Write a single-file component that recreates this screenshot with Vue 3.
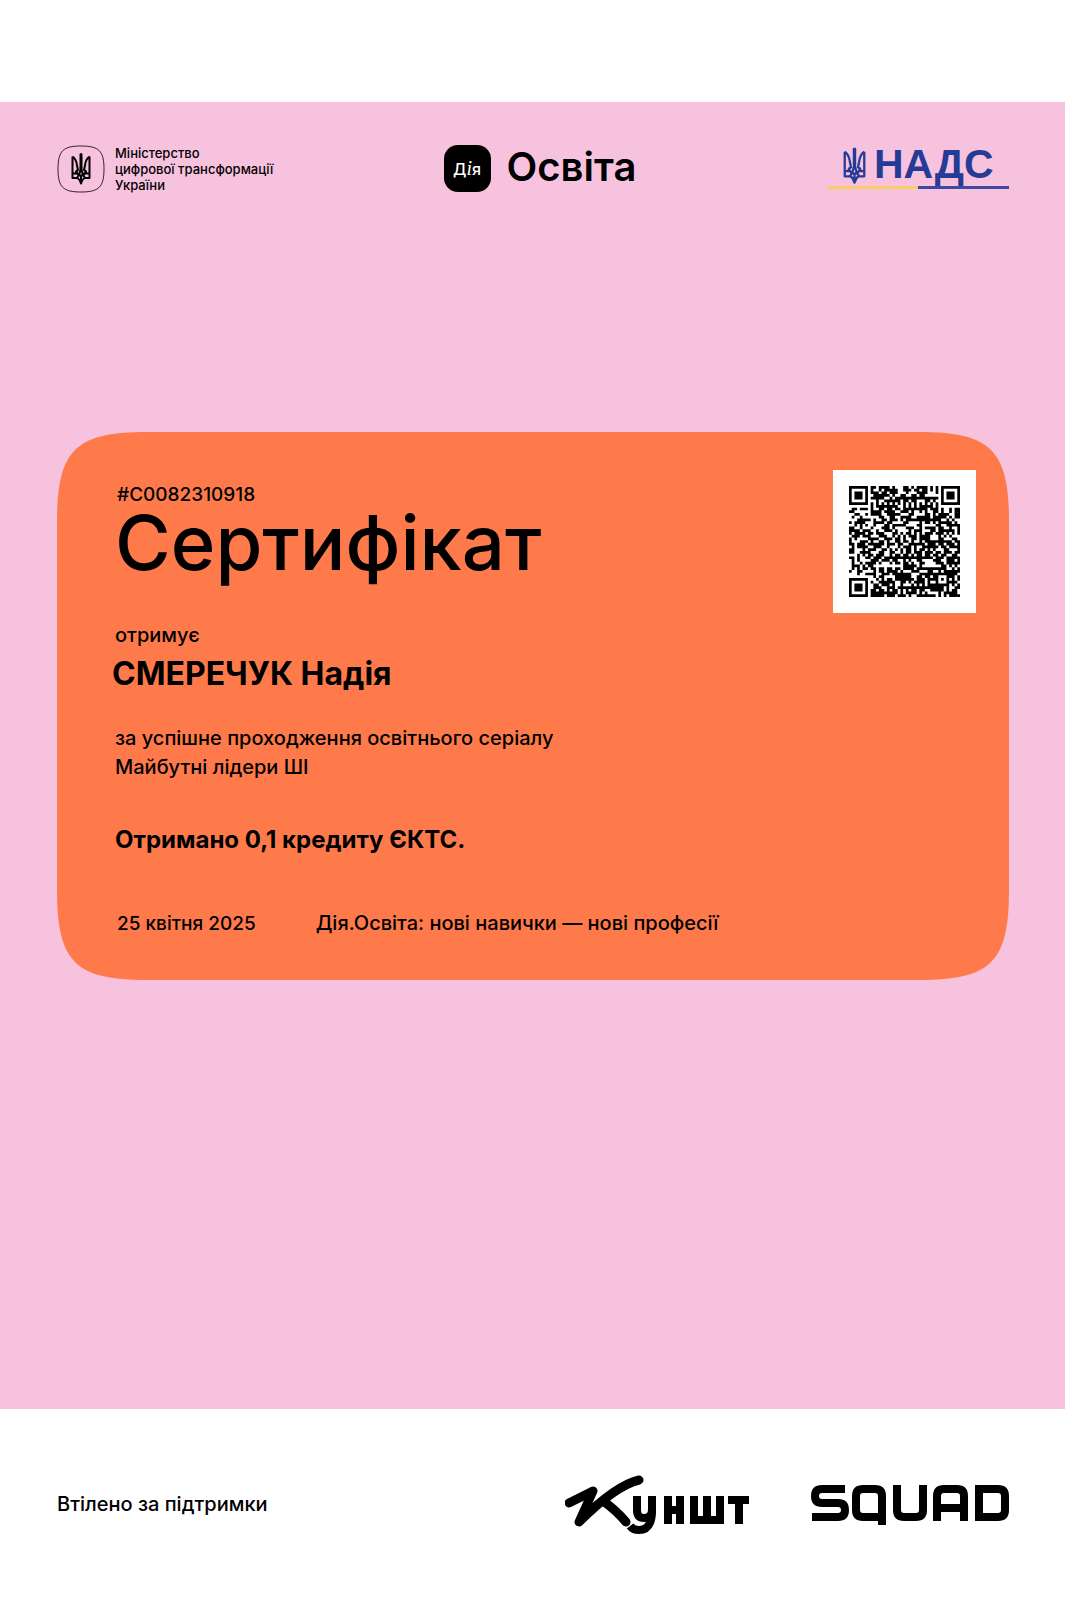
<script setup>
const SIZE = 41

function inSquare(x, y, cx, cy) {
  return Math.max(Math.abs(x - cx), Math.abs(y - cy))
}

function noise(x, y) {
  let h = Math.imul(x + 11, 374761393) ^ Math.imul(y + 7, 668265263)
  h = Math.imul(h ^ (h >>> 13), 1274126177)
  return ((h ^ (h >>> 16)) >>> 0) / 4294967296
}

function isDark(x, y) {
  const eyes = [[3, 3], [SIZE - 4, 3], [3, SIZE - 4]]
  for (const [cx, cy] of eyes) {
    const d = inSquare(x, y, cx, cy)
    if (d <= 4) return d !== 2 && d !== 4
  }
  const a = inSquare(x, y, SIZE - 7, SIZE - 7)
  if (a <= 2) return a !== 1
  if (x === 6 || y === 6) return (x + y) % 2 === 0
  return noise(x, y) < 0.61
}

let modules = ''
for (let y = 0; y < SIZE; y++) {
  for (let x = 0; x < SIZE; x++) {
    if (isDark(x, y)) modules += `M${x} ${y}h1v1h-1z`
  }
}

const trident = 'M3 7V50H13Q18 53 20 61Q22 53 27 50H37V7M3 7Q11 13 12 25L14 34Q9 36 10 41H3M37 7Q29 13 28 25L26 34Q31 36 30 41H37M20 28Q18 42 12 50M20 28Q22 42 28 50M11 38Q13 45 20 45Q27 45 29 38M20 45V61'
</script>

<template>
  <main class="page">
    <section class="sheet">
      <header class="header">
        <div class="ministry">
          <svg class="badge" viewBox="0 0 48 48" aria-hidden="true">
            <path d="M24 1C42 1 47 6 47 24S42 47 24 47 1 42 1 24 6 1 24 1z" fill="none" stroke="#33202c" stroke-width="1" />
            <svg x="14" y="8" width="20" height="32" viewBox="0 0 40 64">
              <path class="trident" :d="trident" />
              <path class="spike" d="M20 3V30" />
            </svg>
          </svg>
          <p class="ministry-name">Міністерство<br />цифрової трансформації<br />України</p>
        </div>

        <div class="osvita">
          <span class="diia"><span>Д<i>і</i>я</span></span>
          <span class="osvita-name">Освіта</span>
        </div>

        <div class="nads">
          <div class="nads-row">
            <svg class="nads-trident" viewBox="0 0 40 64" aria-hidden="true">
              <path class="trident" :d="trident" />
              <path class="spike" d="M20 3V30" />
            </svg>
            <span>НАДС</span>
          </div>
          <div class="flag"></div>
        </div>
      </header>

      <article class="card">
        <svg class="card-shape" viewBox="0 0 952 548" preserveAspectRatio="none" aria-hidden="true">
          <path d="M90 0H862C934 0 952 18 952 90V458C952 530 934 548 862 548H90C18 548 0 530 0 458V90C0 18 18 0 90 0z" fill="#ff7a4b" />
        </svg>
        <div class="card-top">
          <div class="heading">
            <p class="number">#C0082310918</p>
            <h1>Сертифікат</h1>
          </div>
          <div class="qr">
            <svg :viewBox="`0 0 ${SIZE} ${SIZE}`" role="img" aria-label="QR">
              <path :d="modules" />
            </svg>
          </div>
        </div>
        <p class="receives">отримує</p>
        <h2>СМЕРЕЧУК Надія</h2>
        <p class="reason">за успішне проходження освітнього серіалу<br />Майбутні лідери ШІ</p>
        <p class="credit">Отримано 0,1 кредиту ЄКТС.</p>
        <div class="meta">
          <span>25 квітня 2025</span>
          <span>Дія.Освіта: нові навички — нові професії</span>
        </div>
      </article>
    </section>

    <footer class="footer">
      <p>Втілено за підтримки</p>
      <div class="partners">
        <svg class="kunsht" viewBox="0 0 188 64" role="img" aria-label="Куншт">
          <g fill="none" stroke="#000">
            <path d="M4 29L28 17 14 48C31 31 53 11 74 6M38 27Q51 36 61 48" stroke-width="9" stroke-linecap="round" stroke-linejoin="round" />
            <path d="M72 22V36Q72 44 79 44Q87 44 87 35V22" stroke-width="8" />
            <path d="M87 22V39Q86 56 74 56Q68 56 65 52" stroke-width="8" />
            <path d="M103 22V50M115 22V50M103 36H115M129 22V50M142 22V50M155 22V50M125 46H159M163 26H184M174 24V50" stroke-width="8" />
          </g>
        </svg>
        <svg class="squad" viewBox="0 0 198 44" role="img" aria-label="SQUAD">
          <g fill="none" stroke="#000" stroke-width="8">
            <path d="M34 5H11Q4 5 4 12T11 19H27Q34 19 34 26T27 33H1" />
            <path d="M71 41V12Q71 5 64 5H52Q45 5 45 12V26Q45 33 52 33H71" />
            <path d="M86 1V26Q86 33 93 33H105Q112 33 112 26V1" />
            <path d="M126 37V12Q126 5 133 5H146Q153 5 153 12V37M126 24H153" />
            <path d="M168 5H187Q194 5 194 12V26Q194 33 187 33H168z" />
          </g>
        </svg>
      </div>
    </footer>
  </main>
</template>

<style>
body {
  margin: 0;
  background: #fff;
}
</style>

<style scoped>
.page {
  padding-top: 102px;
  font-family: Inter, "Liberation Sans", sans-serif;
  font-size: 20px;
  line-height: 29px;
  font-weight: 500;
  color: #000;
}

p,
h1,
h2 {
  margin: 0;
}

.sheet {
  padding: 43px 56px 429px 57px;
  background: #f7c2de;
}

.header {
  display: grid;
  grid-template-columns: 1fr auto 1fr;
  align-items: start;
}

.ministry {
  display: flex;
  gap: 10px;
}

.badge {
  width: 48px;
  height: 48px;
}

.trident {
  fill: none;
  stroke: currentColor;
  stroke-width: 4;
  stroke-linejoin: round;
}

.spike {
  stroke: currentColor;
  stroke-width: 6;
  stroke-linecap: round;
}

.ministry-name {
  font-size: 13px;
  line-height: 16px;
}

.osvita {
  display: flex;
  align-items: flex-start;
  gap: 16px;
  padding-left: 14px;
}

.diia {
  display: grid;
  place-items: center;
  width: 47px;
  height: 47px;
  border-radius: 14px;
  background: #000;
  color: #fff;
  font-size: 16px;
  font-weight: 500;
}

.diia i {
  font-family: "Liberation Serif", serif;
  font-size: 20px;
}

.osvita-name {
  font-size: 40px;
  line-height: 44px;
  font-weight: 600;
}

.nads {
  justify-self: end;
  width: 182px;
  color: #263b96;
}

.nads-row {
  display: flex;
  align-items: center;
  gap: 8px;
  height: 41px;
  padding-left: 16px;
  font-family: "Liberation Sans", sans-serif;
  font-size: 41px;
  line-height: 36px;
  font-weight: 700;
}

.nads-row span {
  padding-bottom: 4px;
}

.nads-trident {
  width: 23px;
  height: 38px;
}

.flag {
  height: 3px;
  background: linear-gradient(90deg, #f9cf63 50%, #3f4a9e 50%);
}

.card {
  position: relative;
  margin-top: 239px;
  padding: 38px 33px 42px 58px;
}

.card-shape {
  position: absolute;
  inset: 0;
  width: 100%;
  height: 100%;
}

.card > :not(.card-shape) {
  position: relative;
}

.card-top {
  display: flex;
  justify-content: space-between;
}

.heading {
  padding-top: 13px;
}

.number {
  padding-left: 2px;
  font-size: 19px;
  line-height: 24px;
}

h1 {
  font-size: 76px;
  line-height: 70px;
  font-weight: 500;
}

.qr {
  box-sizing: border-box;
  width: 143px;
  height: 143px;
  padding: 16px;
  background: #fff;
}

.qr svg {
  display: block;
  width: 100%;
  height: 100%;
}

.receives {
  margin-top: 8px;
}

h2 {
  margin: 4px 0 0 -3px;
  font-size: 32px;
  line-height: 40px;
  font-weight: 700;
}

.reason {
  margin-top: 30px;
}

.credit {
  margin-top: 42px;
  font-size: 24px;
  line-height: 32px;
  font-weight: 700;
}

.meta {
  display: flex;
  gap: 60px;
  margin-top: 53px;
  padding-left: 2px;
}

.meta span:first-child {
  font-size: 19px;
}

.footer {
  display: flex;
  justify-content: space-between;
  align-items: center;
  padding: 62px 56px 62px 57px;
}

.partners {
  display: flex;
  align-items: center;
  gap: 58px;
  padding-top: 3px;
}

.kunsht {
  width: 188px;
  height: 64px;
}

.squad {
  width: 198px;
  height: 44px;
}
</style>
